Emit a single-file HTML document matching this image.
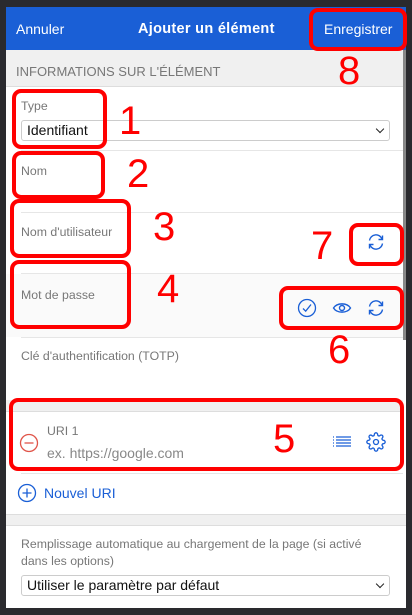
<!DOCTYPE html><html><head><meta charset="utf-8"><style>
*{margin:0;padding:0;box-sizing:border-box}
body{width:412px;height:615px;background:#2a2a2e;font-family:"Liberation Sans","DejaVu Sans",sans-serif;position:relative;overflow:hidden}
.a{position:absolute}
#pg{position:absolute;left:6px;top:7px;width:400px;height:601px;background:#fff;overflow:hidden}
.lbl{position:absolute;font-size:12.3px;color:#777}
.hr{position:absolute;left:15px;right:0;height:1px;background:#e6e6e6}
.sel{position:absolute;left:15px;width:369px;height:21px;border:1px solid #ccc;border-radius:3px;background:#fff;font-size:14px;color:#111;padding:1px 0 0 5px}
.sel:after{content:"";position:absolute;right:6px;top:5px;width:5px;height:5px;border-right:1.6px solid #222;border-bottom:1.6px solid #222;transform:rotate(45deg)}
.box{position:absolute;border:4px solid #f00;border-radius:9px}
.n{position:absolute;color:#f00;font-size:40px;line-height:40px}
svg{position:absolute}
</style></head><body>
<div id="pg">
<div class="a" style="left:0;top:0;width:400px;height:43px;background:#1a5fd6"></div>
<div class="a" style="left:10px;top:14px;color:#fff;font-size:14px">Annuler</div>
<div class="a" style="left:132px;top:14px;color:#fff;font-size:14.5px;font-weight:bold;letter-spacing:0.3px">Ajouter un élément</div>
<div class="a" style="left:318px;top:14px;color:#fff;font-size:14px">Enregistrer</div>
<div class="a" style="left:0;top:43px;width:397px;height:37px;background:#f0f0f0;border-bottom:1px solid #ddd"></div>
<div class="a" style="left:10px;top:57px;color:#777;font-size:13px">INFORMATIONS SUR L'ÉLÉMENT</div>
<div class="a" style="left:397px;top:43px;width:3px;height:290px;background:#888"></div>
<div class="lbl" style="left:15px;top:92px">Type</div>
<div class="sel" style="top:113px">Identifiant</div>
<div class="hr" style="top:143px;right:3px"></div>
<div class="lbl" style="left:15px;top:157px">Nom</div>
<div class="hr" style="top:205px;right:3px"></div>
<div class="lbl" style="left:15px;top:218px">Nom d'utilisateur</div>
<div class="a" style="left:0;top:267px;width:397px;height:63px;background:#fafafa"></div>
<div class="hr" style="top:266px;right:3px"></div>
<div class="lbl" style="left:15px;top:281px">Mot de passe</div>
<div class="hr" style="top:330px;right:3px"></div>
<div class="lbl" style="left:15px;top:342px">Clé d'authentification (TOTP)</div>
<div class="a" style="left:0;top:393px;width:397px;height:12px;background:#f0f0f0;border-bottom:1px solid #ddd"></div>
<div class="lbl" style="left:41px;top:417px">URI 1</div>
<div class="a" style="left:41px;top:438px;font-size:14px;color:#888">ex. https://google.com</div>
<div class="hr" style="top:466px;right:3px"></div>
<div class="a" style="left:38px;top:478px;font-size:14px;color:#1a5fd6">Nouvel URI</div>
<div class="a" style="left:0;top:507px;width:400px;height:12px;background:#f0f0f0;border-top:1px solid #ddd;border-bottom:1px solid #ddd"></div>
<div class="lbl" style="left:15px;top:529px;width:352px;line-height:17px">Remplissage automatique au chargement de la page (si activé dans les options)</div>
<div class="sel" style="top:568px">Utiliser le paramètre par défaut</div>
</div>
<svg style="left:366px;top:232px" width="20" height="20" viewBox="0 0 20 20" fill="none" stroke="#1a5fd6" stroke-width="1.4"><path d="M3.5 8.5A6.5 6.5 0 0 1 16 7"/><path d="M16.5 11.5A6.5 6.5 0 0 1 4 13"/><path d="M16.5 3.5V7.5H12.5"/><path d="M3.5 16.5V12.5H7.5"/></svg>
<svg style="left:366px;top:298px" width="20" height="20" viewBox="0 0 20 20" fill="none" stroke="#1a5fd6" stroke-width="1.4"><path d="M3.5 8.5A6.5 6.5 0 0 1 16 7"/><path d="M16.5 11.5A6.5 6.5 0 0 1 4 13"/><path d="M16.5 3.5V7.5H12.5"/><path d="M3.5 16.5V12.5H7.5"/></svg>
<svg style="left:297px;top:298px" width="20" height="20" viewBox="0 0 20 20" fill="none" stroke="#1a5fd6" stroke-width="1.3"><circle cx="10" cy="10" r="8.5"/><path d="M6 10.5L8.7 13.2L14 6.5"/></svg>
<svg style="left:332px;top:299px" width="20" height="18" viewBox="0 0 20 18" fill="none" stroke="#1a5fd6" stroke-width="1.4"><path d="M1.5 9C5 3.5 15 3.5 18.5 9C15 14.5 5 14.5 1.5 9Z"/><circle cx="10" cy="9" r="2.5"/></svg>
<svg style="left:19px;top:433px" width="20" height="20" viewBox="0 0 20 20" fill="none" stroke="#e0554a" stroke-width="1.3"><circle cx="10" cy="10" r="8.5"/><path d="M5.5 10H14.5"/></svg>
<svg style="left:17px;top:483px" width="20" height="20" viewBox="0 0 20 20" fill="none" stroke="#1a5fd6" stroke-width="1.3"><circle cx="10" cy="10" r="8.5"/><path d="M5.5 10H14.5M10 5.5V14.5"/></svg>
<svg style="left:332px;top:435px" width="20" height="14" viewBox="0 0 20 14" fill="none" stroke="#1a5fd6" stroke-width="1.3"><path d="M1 2H2M1 5H2M1 8H2M1 11H2M4 2H19M4 5H19M4 8H19M4 11H19"/></svg>
<svg style="left:366px;top:432px" width="20" height="20" viewBox="0 0 24 24" fill="none" stroke="#1a5fd6" stroke-width="1.6"><circle cx="12" cy="12" r="3"/><path d="M19.4 15a1.650 1.650 0 0 0 .33 1.82l.06.06a2 2 0 1 1-2.83 2.830l-.06-.06a1.65 1.65 0 0 0-1.82-.33 1.65 1.65 0 0 0-1 1.51V21a2 2 0 1 1-4 0v-.09A1.65 1.65 0 0 0 9 19.4a1.65 1.65 0 0 0-1.82.33l-.06.06a2 2 0 1 1-2.830-2.83l.06-.06A1.65 1.65 0 0 0 4.68 15a1.65 1.65 0 0 0-1.51-1H3a2 2 0 1 1 0-4h.09A1.65 1.65 0 0 0 4.6 9a1.65 1.65 0 0 0-.33-1.82l-.06-.06a2 2 0 1 1 2.83-2.83l.06.06A1.65 1.65 0 0 0 9 4.68 1.65 1.65 0 0 0 10 3.17V3a2 2 0 1 1 4 0v.09a1.65 1.65 0 0 0 1 1.51 1.65 1.65 0 0 0 1.82-.33l.06-.06a2 2 0 1 1 2.83 2.83l-.06.06A1.65 1.65 0 0 0 19.4 9a1.65 1.65 0 0 0 1.51 1H21a2 2 0 1 1 0 4h-.09a1.65 1.65 0 0 0-1.51 1z"/></svg>
<div class="box" style="left:309px;top:8px;width:98px;height:43px"></div>
<div class="box" style="left:12px;top:89px;width:95px;height:60px"></div>
<div class="box" style="left:12px;top:151px;width:93px;height:48px"></div>
<div class="box" style="left:10px;top:199px;width:121px;height:59px"></div>
<div class="box" style="left:10px;top:260px;width:121px;height:69px"></div>
<div class="box" style="left:349px;top:223px;width:55px;height:43px"></div>
<div class="box" style="left:279px;top:286px;width:125px;height:44px"></div>
<div class="box" style="left:9px;top:398px;width:395px;height:73px"></div>
<div class="n" style="left:338px;top:51px">8</div>
<div class="n" style="left:119px;top:101px">1</div>
<div class="n" style="left:127px;top:154px">2</div>
<div class="n" style="left:153px;top:207px">3</div>
<div class="n" style="left:157px;top:269px">4</div>
<div class="n" style="left:311px;top:226px">7</div>
<div class="n" style="left:328px;top:330px">6</div>
<div class="n" style="left:273px;top:419px">5</div>
</body></html>
